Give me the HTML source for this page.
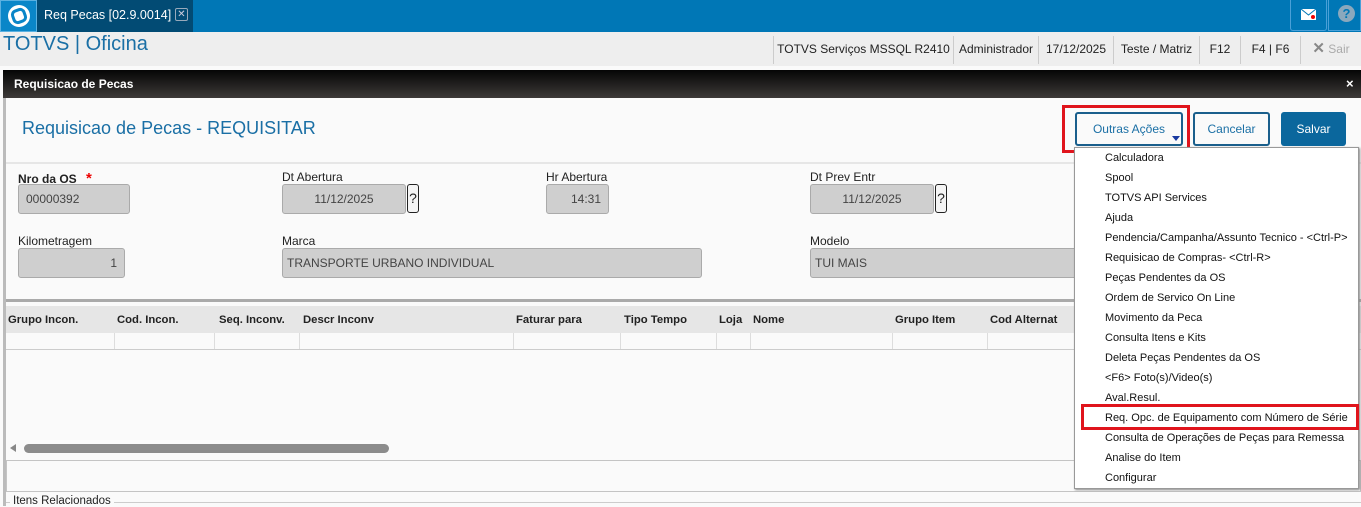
<!DOCTYPE html>
<html><head><meta charset="utf-8"><style>
*{box-sizing:border-box;margin:0;padding:0}
body{width:1361px;height:506px;overflow:hidden;background:#fafafa;font-family:"Liberation Sans",Arial,sans-serif;font-size:12px;color:#222;position:relative}
.a{position:absolute}
.inp{position:absolute;background:#cfcfcf;border:1px solid #aaa;border-radius:3px;font-size:12px;color:#444;padding:0 7px;line-height:28px}
.lbl{position:absolute;font-size:12px;color:#222}
.q{position:absolute;width:12px;height:29px;border:1px solid #222;border-radius:3px;background:#f4f4f4;font-size:14px;text-align:center;line-height:27px}
.seg{position:absolute;top:36px;height:28px;border-left:1px solid #ccc;font-size:12px;line-height:26px;text-align:center;color:#222}
.col{position:absolute;top:306px;font-weight:bold;font-size:11.3px;line-height:28px}
.vs{position:absolute;top:333px;height:16px;border-left:1px solid #ddd}
.mi{position:absolute;left:1105px;font-size:11px;color:#111}
</style></head><body>
<div class="a" style="left:0;top:0;width:1361px;height:32px;background:#0077b6"></div>
<div class="a" style="left:0;top:0;width:37px;height:32px;background:#0a86c8;border:1px solid #5ab0e0"></div>
<svg class="a" style="left:7px;top:4px" width="24" height="24"><circle cx="12" cy="12" r="11" fill="#fff"/><rect x="6" y="6" width="12" height="12" rx="4" fill="none" stroke="#0a86c8" stroke-width="3" transform="rotate(-20 12 12)"/></svg>
<div class="a" style="left:37px;top:0;width:156px;height:32px;background:#024b74"></div>
<div class="a" style="left:44px;top:8px;color:#fff;font-size:12.5px">Req Pecas [02.9.0014]</div>
<div class="a" style="left:175px;top:8px;width:13px;height:13px;border:1px solid #9ab;border-radius:2px;color:#ccd;font-size:10px;line-height:11px;text-align:center">✕</div>
<div class="a" style="left:1290px;top:0;width:37px;height:31px;border:1px solid #4aa0d8;border-top:none;border-radius:0 0 3px 3px"></div>
<svg class="a" style="left:1301px;top:9px" width="15" height="12"><rect width="15" height="11" fill="#fff"/><path d="M0 0L7.5 6L15 0" stroke="#0077b6" fill="none"/><circle cx="12" cy="8" r="2" fill="#e00"/></svg>
<div class="a" style="left:1328px;top:0;width:33px;height:31px;border:1px solid #4aa0d8;border-top:none"></div>
<div class="a" style="left:1338px;top:5px;width:17px;height:17px;border-radius:50%;background:#8aa8bd;color:#0077b6;font-weight:bold;text-align:center;line-height:17px;font-size:13px">?</div>
<div class="a" style="left:0;top:32px;width:1361px;height:34px;background:#eee"></div>
<div class="a" style="left:3px;top:33px;font-size:20px;color:#1a6fa5">TOTVS | Oficina</div>
<div class="seg" style="left:773px;width:180px">TOTVS Serviços MSSQL R2410</div>
<div class="seg" style="left:953px;width:85px">Administrador</div>
<div class="seg" style="left:1038px;width:75px">17/12/2025</div>
<div class="seg" style="left:1113px;width:86px">Teste / Matriz</div>
<div class="seg" style="left:1199px;width:41px">F12</div>
<div class="seg" style="left:1240px;width:60px">F4 | F6</div>
<div class="seg" style="left:1300px;width:61px;color:#aaa"><b style="color:#888;font-size:15px">✕</b> Sair</div>
<div class="a" style="left:3px;top:70px;width:1358px;height:28px;background:linear-gradient(#050505,#3d3a38)"></div>
<div class="a" style="left:14px;top:77px;color:#fff;font-weight:bold;font-size:12px">Requisicao de Pecas</div>
<div class="a" style="left:1346px;top:76px;color:#fff;font-weight:bold;font-size:13px">×</div>
<div class="a" style="left:3px;top:98px;width:3px;height:408px;background:#bbb"></div>
<div class="a" style="left:22px;top:118px;font-size:18px;color:#1a6fa5">Requisicao de Pecas - REQUISITAR</div>
<div class="a" style="left:1075px;top:112px;width:108px;height:34px;border:2px solid #1a5f8c;border-radius:3px;color:#1a6fa5;text-align:center;line-height:30px">Outras Ações</div>
<div class="a" style="left:1172px;top:136px;width:0;height:0;border:4px solid transparent;border-top:5px solid #1a3aa0"></div>
<div class="a" style="left:1062px;top:105px;width:128px;height:48px;border:3px solid #e0141c"></div>
<div class="a" style="left:1193px;top:112px;width:77px;height:34px;border:2px solid #1a5f8c;border-radius:3px;color:#1a6fa5;text-align:center;line-height:30px">Cancelar</div>
<div class="a" style="left:1281px;top:112px;width:65px;height:34px;background:#0b679d;border-radius:3px;color:#fff;text-align:center;line-height:34px">Salvar</div>
<div class="a" style="left:6px;top:162px;width:1355px;height:140px;border-top:2px solid #e6e6e6;border-bottom:3px solid #aaa"></div>
<div class="lbl" style="left:18px;top:170px;font-weight:bold">Nro da OS <span style="color:#e00;font-size:15px;margin-left:6px">*</span></div>
<div class="inp" style="left:18px;top:184px;width:112px;height:30px">00000392</div>
<div class="lbl" style="left:282px;top:170px">Dt Abertura</div>
<div class="inp" style="left:282px;top:184px;width:124px;height:30px;text-align:center">11/12/2025</div><div class="q" style="left:407px;top:184px">?</div>
<div class="lbl" style="left:546px;top:170px">Hr Abertura</div>
<div class="inp" style="left:546px;top:184px;width:63px;height:30px;text-align:right">14:31</div>
<div class="lbl" style="left:810px;top:170px">Dt Prev Entr</div>
<div class="inp" style="left:810px;top:184px;width:124px;height:30px;text-align:center">11/12/2025</div><div class="q" style="left:935px;top:184px">?</div>
<div class="lbl" style="left:18px;top:234px">Kilometragem</div>
<div class="inp" style="left:18px;top:248px;width:107px;height:30px;text-align:right">1</div>
<div class="lbl" style="left:282px;top:234px">Marca</div>
<div class="inp" style="left:282px;top:248px;width:420px;height:30px;padding-left:4px">TRANSPORTE URBANO INDIVIDUAL</div>
<div class="lbl" style="left:810px;top:234px">Modelo</div>
<div class="inp" style="left:810px;top:248px;width:280px;height:30px;padding-left:4px">TUI MAIS</div>
<div class="a" style="left:6px;top:306px;width:1355px;height:27px;background:#e6e6e6"></div>
<div class="col" style="left:8px">Grupo Incon.</div><div class="col" style="left:117px">Cod. Incon.</div><div class="col" style="left:219px">Seq. Inconv.</div><div class="col" style="left:303px">Descr Inconv</div><div class="col" style="left:516px">Faturar para</div><div class="col" style="left:624px">Tipo Tempo</div><div class="col" style="left:719px">Loja</div><div class="col" style="left:753px">Nome</div><div class="col" style="left:895px">Grupo Item</div><div class="col" style="left:990px">Cod Alternat</div>
<div class="vs" style="left:114px"></div><div class="vs" style="left:214px"></div><div class="vs" style="left:299px"></div><div class="vs" style="left:513px"></div><div class="vs" style="left:620px"></div><div class="vs" style="left:716px"></div><div class="vs" style="left:750px"></div><div class="vs" style="left:892px"></div><div class="vs" style="left:987px"></div>
<div class="a" style="left:6px;top:349px;width:1355px;border-top:1px solid #ccc"></div>
<div class="a" style="left:10px;top:444px;width:0;height:0;border:4px solid transparent;border-right:6px solid #888;border-left:none"></div>
<div class="a" style="left:24px;top:444px;width:365px;height:9px;background:#8c8c8c;border-radius:5px"></div>
<div class="a" style="left:6px;top:460px;width:1355px;height:32px;border:1px solid #c4c4c4"></div>
<div class="a" style="left:6px;top:502px;width:1355px;border-top:1px solid #ccc"></div>
<div class="a" style="left:10px;top:495px;background:#fafafa;padding:0 3px;font-size:11.5px">Itens Relacionados</div>
<div class="a" style="left:1074px;top:147px;width:285px;height:342px;background:#fff;border:1px solid #999;box-shadow:1px 1px 2px #888"></div>
<div class="mi" style="top:152px">Calculadora</div>
<div class="mi" style="top:172px">Spool</div>
<div class="mi" style="top:192px">TOTVS API Services</div>
<div class="mi" style="top:212px">Ajuda</div>
<div class="mi" style="top:232px">Pendencia/Campanha/Assunto Tecnico - &lt;Ctrl-P&gt;</div>
<div class="mi" style="top:252px">Requisicao de Compras- &lt;Ctrl-R&gt;</div>
<div class="mi" style="top:272px">Peças Pendentes da OS</div>
<div class="mi" style="top:292px">Ordem de Servico On Line</div>
<div class="mi" style="top:312px">Movimento da Peca</div>
<div class="mi" style="top:332px">Consulta Itens e Kits</div>
<div class="mi" style="top:352px">Deleta Peças Pendentes da OS</div>
<div class="mi" style="top:372px">&lt;F6&gt; Foto(s)/Video(s)</div>
<div class="mi" style="top:392px">Aval.Resul.</div>
<div class="mi" style="top:412px">Req. Opc. de Equipamento com Número de Série</div>
<div class="mi" style="top:432px">Consulta de Operações de Peças para Remessa</div>
<div class="mi" style="top:452px">Analise do Item</div>
<div class="mi" style="top:472px">Configurar</div>
<div class="a" style="left:1081px;top:404px;width:278px;height:26px;border:3px solid #e0141c"></div>
</body></html>
